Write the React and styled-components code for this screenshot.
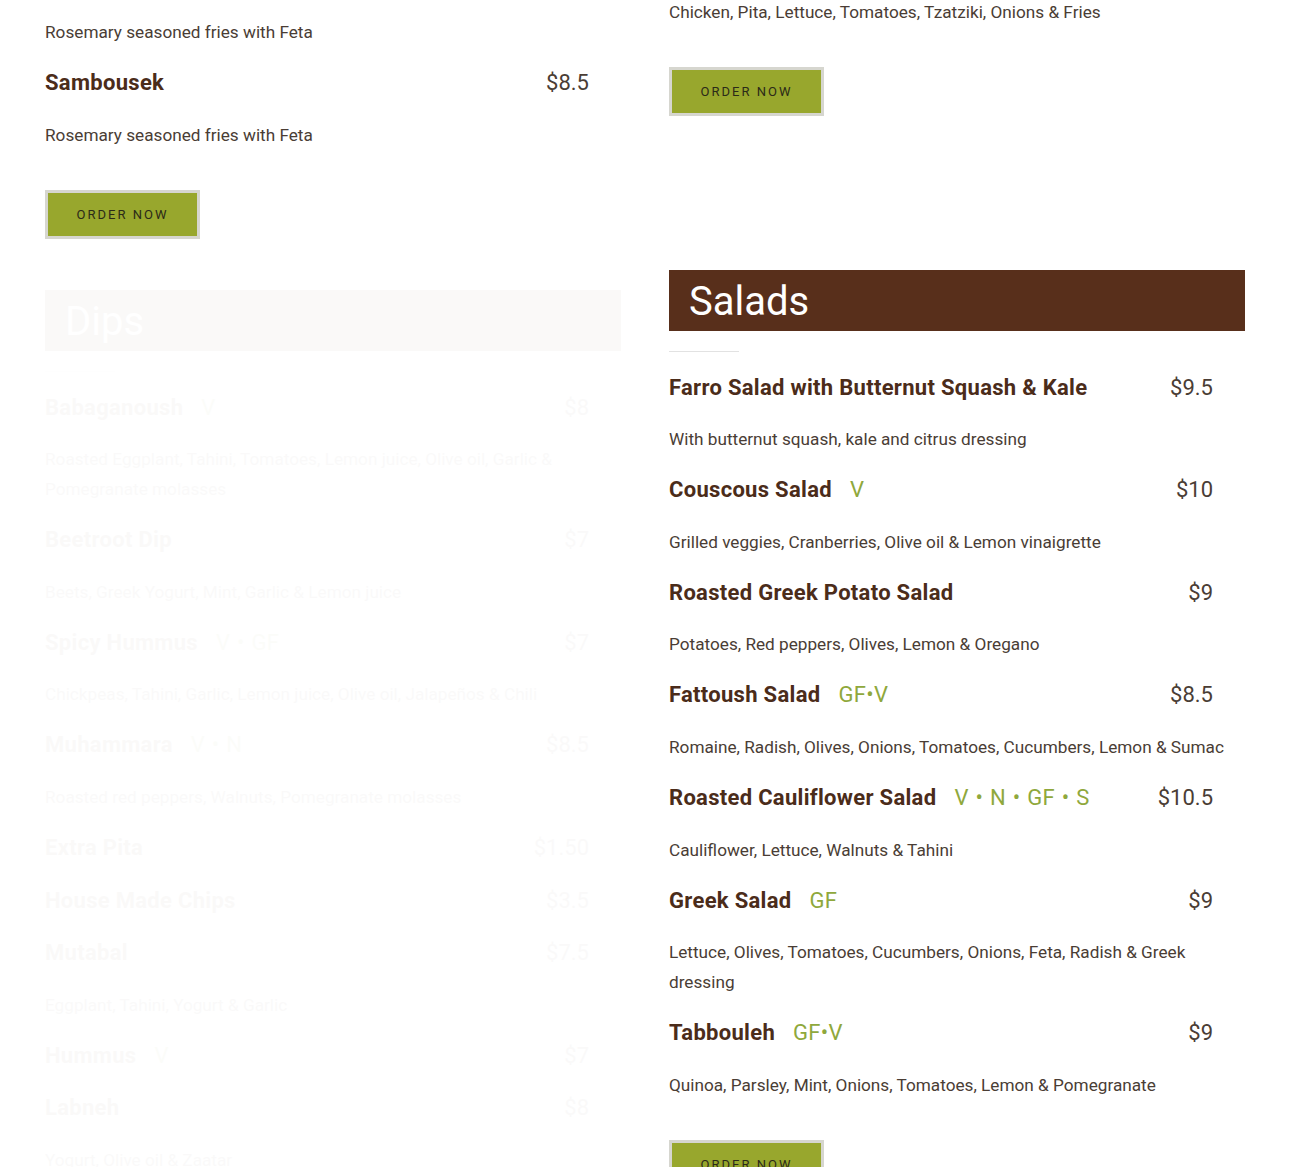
import React from 'react'
import styled, { createGlobalStyle } from 'styled-components'

const GlobalStyle = createGlobalStyle`
  body {
    margin: 0;
    background: #fff;
    font-family: Roboto, "Liberation Sans", sans-serif;
    overflow: hidden;
  }
`

const Page = styled.div`
  max-width: 1200px;
  margin: -3px auto 0;
  display: grid;
  grid-template-columns: 1fr 1fr;
  column-gap: 48px;
  row-gap: 31px;
  align-items: start;
`

const Section = styled.section`
  display: flex;
  flex-direction: column;
  padding-top: ${p => p.$lead || 0}px;
  opacity: ${p => (p.$faded ? 0.022 : 1)};
  transform: ${p => (p.$faded ? 'translateY(20px)' : 'none')};
`

const Banner = styled.h2`
  margin: 0;
  height: 61px;
  padding: 0 20px;
  background: #582f1b;
  color: #fff;
  font-size: 40px;
  font-weight: 400;
  line-height: 63px;
`

const Rule = styled.hr`
  width: 70px;
  height: 1px;
  border: 0;
  background: #e2e2e2;
  margin: 20px 0;
`

const List = styled.div`
  display: flex;
  flex-direction: column;
  gap: 20px;
`

const ItemHead = styled.div`
  display: flex;
  align-items: baseline;
  line-height: 32.6px;
  padding-right: 32px;
`

const Name = styled.span`
  font-size: 22px;
  font-weight: 700;
  color: #4b2c1a;
  letter-spacing: 0.3px;
`

const Tag = styled.span`
  margin-left: 18px;
  font-size: 22px;
  color: #8fa83c;
  letter-spacing: 0.3px;
  word-spacing: 1px;
`

const Price = styled.span`
  margin-left: auto;
  font-size: 22px;
  color: #4a3d35;
`

const Desc = styled.p`
  margin: 0;
  font-size: 17.2px;
  line-height: 30px;
  color: #4a3d35;
`

const OrderButton = styled.button`
  align-self: flex-start;
  margin-top: 40px;
  width: 155px;
  height: 49px;
  border: 3px solid #d6d6cf;
  background: #98a72d;
  color: #2b2a18;
  font-family: inherit;
  font-size: 13px;
  letter-spacing: 2px;
  text-transform: uppercase;
  cursor: pointer;
`

const dips = [
  { name: 'Babaganoush', tag: 'V', price: '$8', desc: 'Roasted Eggplant, Tahini, Tomatoes, Lemon juice, Olive oil, Garlic & Pomegranate molasses' },
  { name: 'Beetroot Dip', price: '$7', desc: 'Beets, Greek Yogurt, Mint, Garlic & Lemon juice' },
  { name: 'Spicy Hummus', tag: 'V • GF', price: '$7', desc: 'Chickpeas, Tahini, Garlic, Lemon juice, Olive oil, Jalapeños & Chili' },
  { name: 'Muhammara', tag: 'V • N', price: '$8.5', desc: 'Roasted red peppers, Walnuts, Pomegranate molasses' },
  { name: 'Extra Pita', price: '$1.50' },
  { name: 'House Made Chips', price: '$3.5' },
  { name: 'Mutabal', price: '$7.5', desc: 'Eggplant, Tahini, Yogurt & Garlic' },
  { name: 'Hummus', tag: 'V', price: '$7' },
  { name: 'Labneh', price: '$8', desc: 'Yogurt, Olive oil & Zaatar' },
]

const salads = [
  { name: 'Farro Salad with Butternut Squash & Kale', price: '$9.5', desc: 'With butternut squash, kale and citrus dressing' },
  { name: 'Couscous Salad', tag: 'V', price: '$10', desc: 'Grilled veggies, Cranberries, Olive oil & Lemon vinaigrette' },
  { name: 'Roasted Greek Potato Salad', price: '$9', desc: 'Potatoes, Red peppers, Olives, Lemon & Oregano' },
  { name: 'Fattoush Salad', tag: 'GF•V', price: '$8.5', desc: 'Romaine, Radish, Olives, Onions, Tomatoes, Cucumbers, Lemon & Sumac' },
  { name: 'Roasted Cauliflower Salad', tag: 'V • N • GF • S', price: '$10.5', desc: 'Cauliflower, Lettuce, Walnuts & Tahini' },
  { name: 'Greek Salad', tag: 'GF', price: '$9', desc: 'Lettuce, Olives, Tomatoes, Cucumbers, Onions, Feta, Radish & Greek dressing' },
  { name: 'Tabbouleh', tag: 'GF•V', price: '$9', desc: 'Quinoa, Parsley, Mint, Onions, Tomatoes, Lemon & Pomegranate' },
]

const MenuItem = ({ name, tag, price, desc }) => (
  <React.Fragment>
    <ItemHead>
      <Name>{name}</Name>
      {tag && <Tag>{tag}</Tag>}
      <Price>{price}</Price>
    </ItemHead>
    {desc && <Desc>{desc}</Desc>}
  </React.Fragment>
)

const Category = ({ title, items, faded }) => (
  <Section $faded={faded}>
    <Banner>{title}</Banner>
    <Rule />
    <List>
      {items.map(item => <MenuItem key={item.name} {...item} />)}
    </List>
    <OrderButton>Order now</OrderButton>
  </Section>
)

const App = () => (
  <React.Fragment>
    <GlobalStyle />
    <Page>
      <Section $lead={20}>
        <List>
          <Desc>Rosemary seasoned fries with Feta</Desc>
          <MenuItem name="Sambousek" price="$8.5" desc="Rosemary seasoned fries with Feta" />
        </List>
        <OrderButton>Order now</OrderButton>
      </Section>
      <Section>
        <List>
          <Desc>Chicken, Pita, Lettuce, Tomatoes, Tzatziki, Onions &amp; Fries</Desc>
        </List>
        <OrderButton>Order now</OrderButton>
      </Section>
      <Category title="Dips" items={dips} faded />
      <Category title="Salads" items={salads} />
    </Page>
  </React.Fragment>
)

export default App
